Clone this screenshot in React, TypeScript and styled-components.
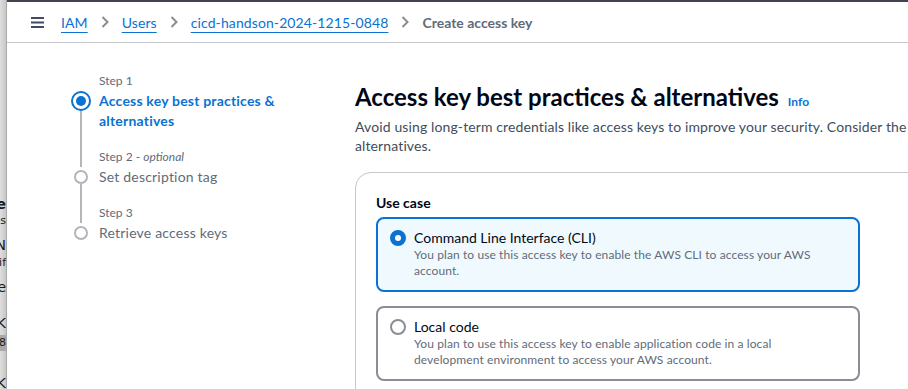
import React from 'react';
import styled, { createGlobalStyle } from 'styled-components';

const GlobalStyle = createGlobalStyle`
  html, body {
    margin: 0;
    padding: 0;
    background: #ffffff;
    overflow: hidden;
  }
  body {
    font-family: Lato, 'Open Sans', Arial, sans-serif;
    color: #000716;
    -webkit-font-smoothing: antialiased;
  }
`;

const Screen = styled.div`
  display: flex;
  width: 908px;
  height: 389px;
  overflow: hidden;
`;

// sliver of the window lying behind the browser
const BehindStrip = styled.div`
  flex: 0 0 6px;
  overflow: hidden;
  background: linear-gradient(to right, #dedede, #c7c7c7);
  border-right: 1px solid #a9a9a9;
`;

const Fragments = styled.div`
  width: 140px;
  margin-left: -134px;
  display: flex;
  flex-direction: column;
  align-items: flex-end;
  color: #1a1a1a;
  font-family: 'DejaVu Sans', sans-serif;
`;

const Frag = styled.div<{ $top: number; $size?: number; $bold?: boolean; $mark?: boolean }>`
  margin-top: ${({ $top }) => $top}px;
  font-size: ${({ $size }) => $size || 14}px;
  font-weight: ${({ $bold }) => ($bold ? 700 : 400)};
  line-height: 16px;
  white-space: nowrap;
  background: ${({ $mark }) => ($mark ? '#a9a9a9' : 'transparent')};
`;

const Window = styled.div`
  flex: 1;
  display: flex;
  flex-direction: column;
  border-top: 2px solid #3f4450;
  min-width: 0;
`;

const TopBar = styled.header`
  height: 40px;
  flex: 0 0 40px;
  display: flex;
  align-items: center;
  padding-left: 24px;
  border-bottom: 1px solid #c6c6cd;
  font-size: 14px;
`;

const MenuButton = styled.button`
  display: flex;
  align-items: center;
  padding: 0;
  margin-right: 17px;
  border: 0;
  background: none;
  cursor: pointer;
`;

const Crumbs = styled.nav`
  display: flex;
  align-items: center;
  gap: 13px;
`;

const CrumbLink = styled.a`
  color: #0972d3;
  text-decoration: underline;
  text-underline-offset: 4px;
  text-decoration-thickness: 1px;
  letter-spacing: 0.1px;
  cursor: pointer;
`;

const CrumbCurrent = styled.span`
  color: #5f6b7a;
  font-weight: 700;
`;

const Body = styled.div`
  flex: 1;
  display: flex;
`;

const Stepper = styled.ol`
  box-sizing: border-box;
  flex: 0 0 348px;
  margin: 0;
  padding: 30px 0 0 64px;
  list-style: none;
  display: grid;
  grid-template-columns: 20px 196px;
  column-gap: 8px;
  align-content: start;
`;

const MarkerCell = styled.div`
  display: flex;
  flex-direction: column;
  align-items: center;
`;

const Rail = styled.div`
  flex: 1;
  width: 2px;
  background: #b4b4bb;
`;

const Dot = styled.div<{ $active?: boolean }>`
  box-sizing: border-box;
  flex: 0 0 auto;
  width: ${({ $active }) => ($active ? 20 : 14)}px;
  height: ${({ $active }) => ($active ? 20 : 14)}px;
  margin-top: ${({ $active }) => ($active ? 0 : 3)}px;
  border-radius: 50%;
  border: 2px solid ${({ $active }) => ($active ? '#0972d3' : '#b4b4bb')};
  display: flex;
  align-items: center;
  justify-content: center;

  &::after {
    content: '';
    display: ${({ $active }) => ($active ? 'block' : 'none')};
    width: 10px;
    height: 10px;
    border-radius: 50%;
    background: #0972d3;
  }
`;

const StepLabel = styled.div`
  font-size: 12px;
  line-height: 16px;
  color: #5f6b7a;
  margin-bottom: 2px;

  em {
    font-style: italic;
  }
`;

const StepTitle = styled.div<{ $active?: boolean }>`
  font-size: 14px;
  line-height: 20px;
  padding-bottom: 18px;
  letter-spacing: 0.2px;
  color: ${({ $active }) => ($active ? '#0972d3' : '#5f6b7a')};
  font-weight: ${({ $active }) => ($active ? 700 : 400)};
`;

const Main = styled.main`
  flex: 0 0 720px;
  padding-top: 39px;
`;

const HeadingRow = styled.div`
  display: flex;
  align-items: baseline;
  gap: 9px;
`;

const Heading = styled.h1`
  margin: 0;
  font-size: 24px;
  line-height: 30px;
  font-weight: 700;
  color: #000716;
`;

const InfoLink = styled.a`
  font-size: 12px;
  font-weight: 700;
  color: #0972d3;
`;

const Intro = styled.p`
  margin: 5px 0 0;
  font-size: 14px;
  line-height: 19px;
  letter-spacing: 0.12px;
  color: #414d5c;
`;

const Card = styled.section`
  margin-top: 17px;
  padding: 20px 20px 24px;
  border: 1px solid #c6c6cd;
  border-radius: 16px;
`;

const FieldLabel = styled.div`
  font-size: 14px;
  font-weight: 700;
  line-height: 20px;
  margin-bottom: 4px;
  color: #000716;
`;

const Options = styled.div`
  display: flex;
  flex-direction: column;
  gap: 14px;
  width: 484px;
`;

const OptionTile = styled.label<{ $checked?: boolean }>`
  display: flex;
  gap: 8px;
  padding: 10px 14px 11px 12px;
  border: 2px solid ${({ $checked }) => ($checked ? '#0972d3' : '#8c8c94')};
  border-radius: 8px;
  background: ${({ $checked }) => ($checked ? '#f0fafe' : '#ffffff')};
  cursor: pointer;
`;

const RadioMark = styled.span<{ $checked?: boolean }>`
  box-sizing: border-box;
  flex: 0 0 16px;
  width: 16px;
  height: 16px;
  margin-top: 1px;
  border-radius: 50%;
  border: ${({ $checked }) => ($checked ? '5px solid #0972d3' : '2px solid #8c8c94')};
  background: #ffffff;
`;

const OptionText = styled.div`
  display: flex;
  flex-direction: column;
`;

const OptionName = styled.span`
  font-size: 14px;
  line-height: 18px;
  color: #000716;
`;

const OptionHint = styled.span`
  font-size: 12px;
  line-height: 16px;
  letter-spacing: 0.1px;
  color: #5f6b7a;
  max-width: 400px;
`;

const Chevron = () => (
  <svg width="8" height="12" viewBox="0 0 8 12" aria-hidden="true">
    <path d="M1.5 1 L6.5 6 L1.5 11" fill="none" stroke="#8c8c94" strokeWidth="2" />
  </svg>
);

const Hamburger = () => (
  <svg width="13" height="11" viewBox="0 0 13 11" aria-hidden="true">
    <rect x="0" y="0" width="13" height="2" fill="#414d5c" />
    <rect x="0" y="4.5" width="13" height="2" fill="#414d5c" />
    <rect x="0" y="9" width="13" height="2" fill="#414d5c" />
  </svg>
);

const steps = [
  { label: 'Step 1', title: 'Access key best practices & alternatives' },
  { label: 'Step 2', optional: true, title: 'Set description tag' },
  { label: 'Step 3', title: 'Retrieve access keys' },
];

const useCases = [
  {
    name: 'Command Line Interface (CLI)',
    hint: 'You plan to use this access key to enable the AWS CLI to access your AWS account.',
    checked: true,
  },
  {
    name: 'Local code',
    hint: 'You plan to use this access key to enable application code in a local development environment to access your AWS account.',
  },
];

const App = () => {
  return (
    <Screen>
      <GlobalStyle />
      <BehindStrip>
        <Fragments>
          <Frag $top={196} $bold>Use case</Frag>
          <Frag $top={1} $size={11}>Credentials</Frag>
          <Frag $top={8}>CLI N</Frag>
          <Frag $top={2} $size={11}>Verif</Frag>
          <Frag $top={8}>Code</Frag>
          <Frag $top={20}>Access K</Frag>
          <Frag $top={4} $size={11} $mark>
            08
          </Frag>
          <Frag $top={24}>Secret K</Frag>
        </Fragments>
      </BehindStrip>
      <Window>
        <TopBar>
          <MenuButton aria-label="Open navigation">
            <Hamburger />
          </MenuButton>
          <Crumbs>
            <CrumbLink>IAM</CrumbLink>
            <Chevron />
            <CrumbLink>Users</CrumbLink>
            <Chevron />
            <CrumbLink>cicd-handson-2024-1215-0848</CrumbLink>
            <Chevron />
            <CrumbCurrent>Create access key</CrumbCurrent>
          </Crumbs>
        </TopBar>
        <Body>
          <Stepper>
            {steps.map((step, i) => (
              <React.Fragment key={step.label}>
                <MarkerCell>{i > 0 && <Rail />}</MarkerCell>
                <StepLabel>
                  {step.label}
                  {step.optional && (
                    <>
                      {' - '}
                      <em>optional</em>
                    </>
                  )}
                </StepLabel>
                <MarkerCell>
                  <Dot $active={i === 0} />
                  {i < steps.length - 1 && <Rail />}
                </MarkerCell>
                <StepTitle $active={i === 0}>{step.title}</StepTitle>
              </React.Fragment>
            ))}
          </Stepper>
          <Main>
            <HeadingRow>
              <Heading>Access key best practices &amp; alternatives</Heading>
              <InfoLink>Info</InfoLink>
            </HeadingRow>
            <Intro>
              Avoid using long-term credentials like access keys to improve your security. Consider the
              following use cases and alternatives.
            </Intro>
            <Card>
              <FieldLabel>Use case</FieldLabel>
              <Options>
                {useCases.map((uc) => (
                  <OptionTile key={uc.name} $checked={uc.checked}>
                    <RadioMark $checked={uc.checked} />
                    <OptionText>
                      <OptionName>{uc.name}</OptionName>
                      <OptionHint>{uc.hint}</OptionHint>
                    </OptionText>
                  </OptionTile>
                ))}
              </Options>
            </Card>
          </Main>
        </Body>
      </Window>
    </Screen>
  );
};

export default App;
